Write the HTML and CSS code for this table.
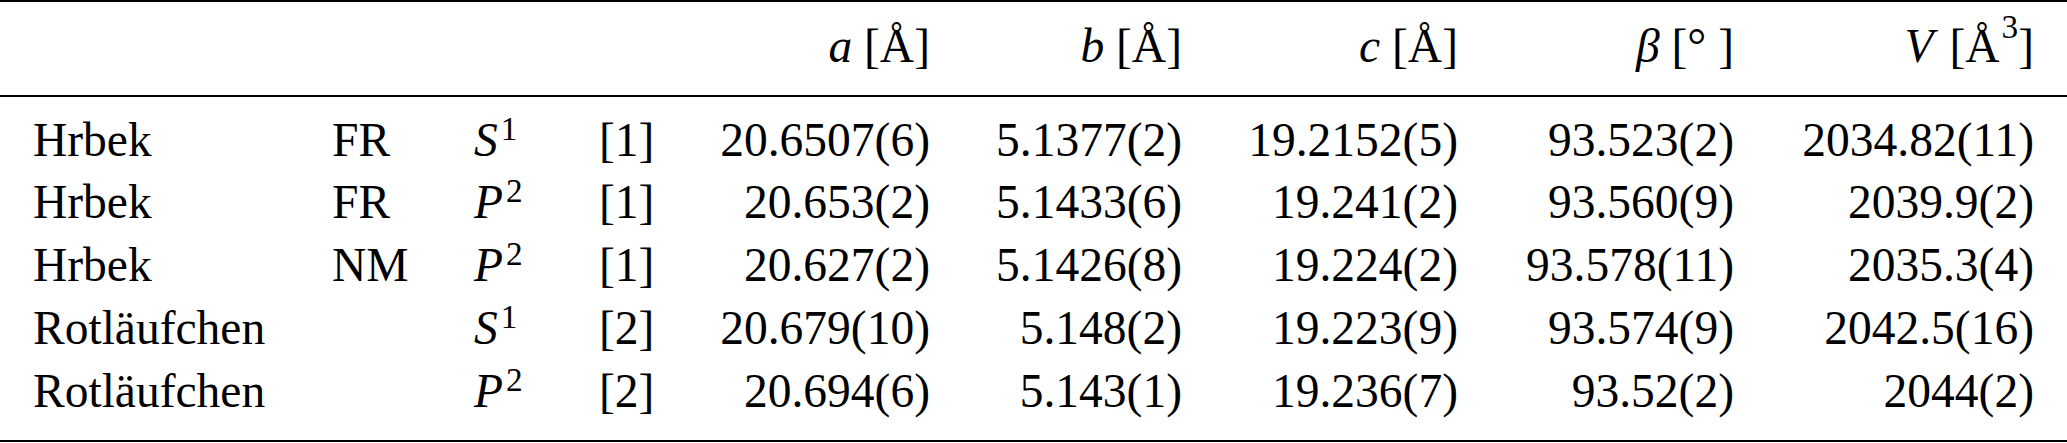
FILE: index.html
```html
<!DOCTYPE html>
<html lang="de">

<head>
    <meta charset="UTF-8">
    <meta name="viewport" content="width=device-width, initial-scale=1.0">
    <title>Gitterparameter</title>
    <link rel="stylesheet" href="styles.css">
</head>

<body>
    <table class="lattice">
        <colgroup>
            <col class="col-name">
            <col class="col-type">
            <col class="col-phase">
            <col class="col-ref">
            <col class="col-a">
            <col class="col-b">
            <col class="col-c">
            <col class="col-beta">
            <col class="col-v">
        </colgroup>
        <thead>
            <tr>
                <th></th>
                <th></th>
                <th></th>
                <th></th>
                <th class="num"><i>a</i> [Å]</th>
                <th class="num"><i>b</i> [Å]</th>
                <th class="num"><i>c</i> [Å]</th>
                <th class="num"><i>β</i> [° ]</th>
                <th class="num"><i class="wide">V</i> [Å<sup class="unit">3</sup>]</th>
            </tr>
        </thead>
        <tbody>
            <tr>
                <td>Hrbek</td>
                <td>FR</td>
                <td><i>S</i><sup class="phase">1</sup></td>
                <td>[1]</td>
                <td class="num">20.6507(6)</td>
                <td class="num">5.1377(2)</td>
                <td class="num">19.2152(5)</td>
                <td class="num">93.523(2)</td>
                <td class="num">2034.82(11)</td>
            </tr>
            <tr>
                <td>Hrbek</td>
                <td>FR</td>
                <td><i>P</i><sup class="phase">2</sup></td>
                <td>[1]</td>
                <td class="num">20.653(2)</td>
                <td class="num">5.1433(6)</td>
                <td class="num">19.241(2)</td>
                <td class="num">93.560(9)</td>
                <td class="num">2039.9(2)</td>
            </tr>
            <tr>
                <td>Hrbek</td>
                <td>NM</td>
                <td><i>P</i><sup class="phase">2</sup></td>
                <td>[1]</td>
                <td class="num">20.627(2)</td>
                <td class="num">5.1426(8)</td>
                <td class="num">19.224(2)</td>
                <td class="num">93.578(11)</td>
                <td class="num">2035.3(4)</td>
            </tr>
            <tr>
                <td>Rotläufchen</td>
                <td></td>
                <td><i>S</i><sup class="phase">1</sup></td>
                <td>[2]</td>
                <td class="num">20.679(10)</td>
                <td class="num">5.148(2)</td>
                <td class="num">19.223(9)</td>
                <td class="num">93.574(9)</td>
                <td class="num">2042.5(16)</td>
            </tr>
            <tr>
                <td>Rotläufchen</td>
                <td></td>
                <td><i>P</i><sup class="phase">2</sup></td>
                <td>[2]</td>
                <td class="num">20.694(6)</td>
                <td class="num">5.143(1)</td>
                <td class="num">19.236(7)</td>
                <td class="num">93.52(2)</td>
                <td class="num">2044(2)</td>
            </tr>
        </tbody>
    </table>
</body>

</html>
```

FILE: styles.css
```css
body {
    margin: 0;
    background-color: white;
    color: #000;
    font-family: "Liberation Serif", "Times New Roman", serif;
}

table {
    width: 2067px;
    table-layout: fixed;
    border-collapse: separate;
    border-spacing: 0;
    font-size: 47.5px;
    line-height: 62.75px;
}

th,
td {
    padding: 0 33px;
    font-weight: normal;
    text-align: left;
    white-space: nowrap;
}

th {
    border-top: 2px solid #000;
    border-bottom: 2px solid #000;
    padding-top: 12.6px;
    padding-bottom: 17.6px;
}

tbody tr:first-child td {
    padding-top: 11.6px;
}

tbody tr:last-child td {
    padding-bottom: 17.6px;
    border-bottom: 2px solid #000;
}

.num {
    text-align: right;
}

sup {
    font-size: 0.7em;
    line-height: 0;
}

.phase {
    vertical-align: 0.48em;
    margin-left: 3px;
}

.unit {
    vertical-align: 0.7em;
    margin-left: 2px;
}

.wide {
    margin-right: 4px;
}

.col-name { width: 299px; }
.col-type { width: 142px; }
.col-phase { width: 125px; }
.col-ref { width: 121px; }
.col-a { width: 276px; }
.col-b { width: 252px; }
.col-c { width: 276px; }
.col-beta { width: 276px; }
.col-v { width: 300px; }
```
